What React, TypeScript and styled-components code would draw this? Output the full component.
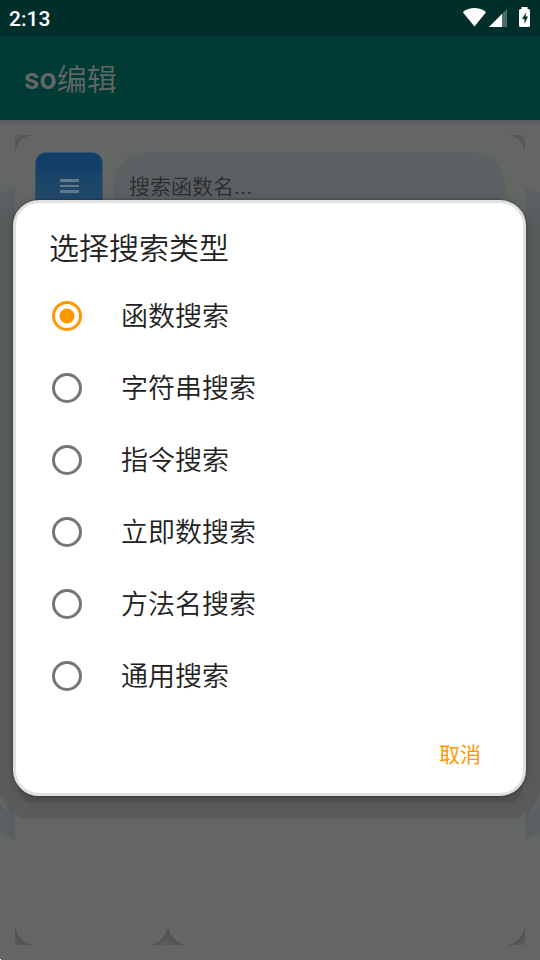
import React from "react";
import styled, { createGlobalStyle } from "styled-components";

const Global = createGlobalStyle`
  * { box-sizing: border-box; }
  html, body { margin: 0; background: #646664; }
  body { font-family: Roboto, "Noto Sans CJK SC", sans-serif; overflow: hidden; }
`;

const Screen = styled.div`
  position: relative;
  width: 540px;
  height: 960px;
  display: flex;
  flex-direction: column;
  overflow: hidden;
  background: #646664;
`;

const StatusBar = styled.div`
  height: 36px;
  flex: none;
  display: flex;
  align-items: center;
  justify-content: space-between;
  padding: 1px 9px 0 9px;
  background: #002e2a;
  color: #fff;
  font-size: 21px;
  font-weight: 500;
`;

const StatusIcons = styled.svg`
  display: block;
  margin-top: -2px;
`;

const AppBar = styled.header`
  height: 84px;
  flex: none;
  display: flex;
  align-items: center;
  padding: 1px 24px 0;
  background: #003c35;
  color: #646665;
  font-size: 30px;
  line-height: 40px;
  font-weight: 600;
`;

const TitleCjk = styled.span`
  font-family: "Noto Sans CJK SC", sans-serif;
  font-weight: 350;
  padding: 0 0 3px 0.4px;
`;

const Content = styled.main`
  flex: 1;
  display: flex;
  flex-direction: column;
  padding: 15px 15px;
  background: linear-gradient(#595b5d, #606267 5px, #606267 7px, transparent 7px);
`;

const Card = styled.section`
  height: 810px;
  padding: 17px 20px 0;
`;

const SearchRow = styled.div`
  display: flex;
  gap: 10px;
`;

const MenuButton = styled.div`
  width: 68px;
  height: 68px;
  display: flex;
  flex-direction: column;
  align-items: center;
  justify-content: center;
  gap: 3px;
  border: 1px solid #315572;
  border-radius: 11px;
  background: linear-gradient(#123f68 0, #123f68 16px, #174369 18px, #1e4767 34px, #244b6c 50px);
`;

const MenuLine = styled.div`
  width: 19px;
  height: 2.5px;
  background: #667b8a;
`;

const SearchField = styled.div`
  width: 392px;
  height: 68px;
  padding: 18px 16px;
  border-radius: 34px;
  background: linear-gradient(#5d6163, #5b5e62);
  color: #2b2c2c;
  font-family: "Noto Sans CJK SC", sans-serif;
  font-weight: 350;
  font-size: 21px;
  line-height: 31px;
`;

const Ellipsis = styled.span`
  font-family: Roboto, sans-serif;
  font-weight: 400;
  letter-spacing: 0.7px;
`;

const Decoration = styled.svg`
  position: absolute;
  left: 0;
  top: 0;
  pointer-events: none;
`;

const Dialog = styled.div`
  position: absolute;
  left: 13px;
  top: 200px;
  width: 513px;
  height: 596px;
  display: flex;
  flex-direction: column;
  padding: 22px 34px 18px;
  border: 3px solid #dfe0e0;
  border-radius: 26px;
  background: #fff;
  color: #212121;
  font-family: "Noto Sans CJK SC", sans-serif;
  font-weight: 350;
  box-shadow: 0 0 3px rgba(0, 0, 0, 0.42), 0 3px 16px rgba(0, 0, 0, 0.12);
`;

const DialogTitle = styled.h1`
  margin: 0 0 0 -1px;
  height: 42px;
  font-size: 30px;
  line-height: 42px;
  font-weight: 350;
`;

const Options = styled.div`
  margin-top: 13px;
  display: flex;
  flex-direction: column;
`;

const Option = styled.label`
  height: 72px;
  display: flex;
  align-items: center;
  gap: 39px;
  padding-left: 2px;
  font-size: 27px;
  line-height: 40px;
`;

const OptionText = styled.span`
  padding-bottom: 2px;
`;

const RadioIcon = styled.svg<{ $on: boolean }>`
  width: 30px;
  height: 30px;
  flex: none;
  color: ${(p) => (p.$on ? "#ff9800" : "#757575")};
`;

const Cancel = styled.button`
  align-self: flex-end;
  margin-top: 26px;
  padding: 0 8px;
  border: 0;
  background: none;
  color: #ff9800;
  font: 400 21px/31px "Noto Sans CJK SC", sans-serif;
`;

const labels = ["函数搜索", "字符串搜索", "指令搜索", "立即数搜索", "方法名搜索", "通用搜索"];

function Radio({ on }: { on: boolean }) {
  return (
    <RadioIcon $on={on} viewBox="0 0 30 30">
      <circle cx="15" cy="15" r="13.5" fill="none" stroke="currentColor" strokeWidth="3" />
      {on && <circle cx="15" cy="15" r="7.5" fill="currentColor" />}
    </RadioIcon>
  );
}

function Backdrop() {
  return (
    <Decoration width="540" height="960" viewBox="0 0 540 960">
      <defs>
        <linearGradient id="tl" x1="0" y1="0" x2="0.55" y2="0.55">
          <stop offset="0" stopColor="#5f6063" />
          <stop offset="1" stopColor="#4e504f" />
        </linearGradient>
        <linearGradient id="tr" x1="1" y1="0" x2="0.45" y2="0.55">
          <stop offset="0" stopColor="#5f6061" />
          <stop offset="1" stopColor="#4e504f" />
        </linearGradient>
        <linearGradient id="bl" x1="0" y1="1" x2="0.45" y2="0.45">
          <stop offset="0" stopColor="#5b5d5d" />
          <stop offset="1" stopColor="#4d4f4e" />
        </linearGradient>
        <linearGradient id="br" x1="1" y1="1" x2="0.55" y2="0.45">
          <stop offset="0" stopColor="#5d5f61" />
          <stop offset="1" stopColor="#4d4f4e" />
        </linearGradient>
        <linearGradient id="side" x1="0" y1="0" x2="0" y2="1">
          <stop offset="0" stopColor="#5d6164" />
          <stop offset="0.07" stopColor="#595c5d" />
          <stop offset="1" stopColor="#5a5c5b" />
        </linearGradient>
      </defs>
      <path d="M15 135H32Q18 137 15 152Z" fill="url(#tl)" />
      <path d="M525 135H508Q522 137 525 152Z" fill="url(#tr)" />
      <path d="M15 928Q19 942 32 945H15Z" fill="url(#bl)" />
      <path d="M168 928Q164 942 151 945H168Z" fill="url(#br)" />
      <path d="M168 928Q172 942 185 945H168Z" fill="url(#bl)" />
      <path d="M525 928Q521 942 508 945H525Z" fill="url(#br)" />
      <path d="M0 195Q6 189 15 186V820L0 796Z" fill="url(#side)" />
      <path d="M540 193Q534 189 525 186V820L540 796Z" fill="url(#side)" />
      <path d="M0 804L15 818V840Q7 837 0 832Z" fill="#5b5f63" />
      <path d="M540 804L525 818V840Q533 837 540 832Z" fill="#5b5f63" />
      <path d="M15 780H525V812Q521 819 512 819H28Q19 819 15 812Z" fill="#5a5c5a" />
      <path d="M18 780H522V790Q518 803 508 803H32Q22 803 18 790Z" fill="#525452" />
      <path d="M0 959H1V960H0Z" fill="#fff" />
    </Decoration>
  );
}

export default function App() {
  return (
    <Screen>
      <Global />
      <StatusBar>
        <span>2:13</span>
        <StatusIcons width="70" height="24" viewBox="0 0 70 24" fill="#fff">
          <path d="M1.8 6.3C8.5.7 18.3.7 25 6.3L13.5 20.5Z" />
          <path d="M28 21L46 3V21Z" opacity=".3" />
          <path d="M28 21L41 8V21Z" />
          <path d="M60.5 1H66.5V3H67.5Q69 3 69 4.5V19.5Q69 21 67.5 21H59.5Q58 21 58 19.5V4.5Q58 3 59.5 3H60.5Z" />
          <path d="M65.5 6L61 13H63.5V18L67 10.5H64.5Z" fill="#002e2a" />
        </StatusIcons>
      </StatusBar>
      <AppBar>so<TitleCjk>编辑</TitleCjk></AppBar>
      <Content>
        <Card>
          <SearchRow>
            <MenuButton><MenuLine /><MenuLine /><MenuLine /></MenuButton>
            <SearchField>搜索函数名<Ellipsis>...</Ellipsis></SearchField>
          </SearchRow>
        </Card>
      </Content>
      <Backdrop />
      <Dialog role="dialog">
        <DialogTitle>选择搜索类型</DialogTitle>
        <Options>
          {labels.map((label, i) => (
            <Option key={label}>
              <Radio on={i === 0} />
              <OptionText>{label}</OptionText>
            </Option>
          ))}
        </Options>
        <Cancel>取消</Cancel>
      </Dialog>
    </Screen>
  );
}
